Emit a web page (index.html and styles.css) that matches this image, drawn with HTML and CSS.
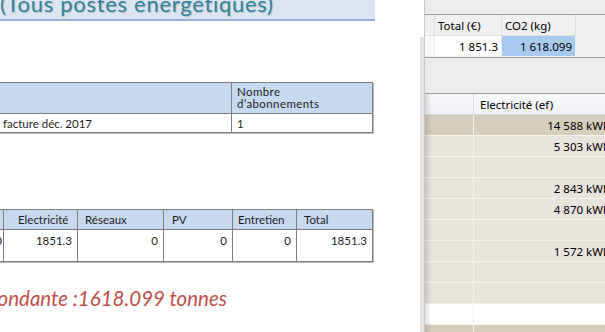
FILE: index.html
```html
<!DOCTYPE html>
<html lang="fr">
<head>
<meta charset="utf-8">
<title>Bilan</title>
<link rel="stylesheet" href="styles.css">
</head>
<body>
<div class="screen">
  <div class="doc">
    <div class="doc-head"><span class="title">(Tous postes énergétiques)</span></div>

    <div class="tbl t1">
      <div class="cell h"></div>
      <div class="cell h">Nombre<br>d’abonnements</div>
      <div class="cell d">facture déc. 2017</div>
      <div class="cell d">1</div>
    </div>

    <div class="tbl t2">
      <div class="cell h"></div>
      <div class="cell h c1">Electricité</div>
      <div class="cell h c2">Réseaux</div>
      <div class="cell h c3">PV</div>
      <div class="cell h c4">Entretien</div>
      <div class="cell h c5">Total</div>
      <div class="cell d n c0">0</div>
      <div class="cell d n">1851.3</div>
      <div class="cell d n">0</div>
      <div class="cell d n">0</div>
      <div class="cell d n">0</div>
      <div class="cell d n">1851.3</div>
    </div>

    <div class="co2"><span>Emission de CO2 correspondante :1618.099 tonnes</span></div>
  </div>

  <div class="gutter"></div>

  <div class="app">
    <div class="app-top"></div>
    <div class="g1">
      <div class="gh"></div>
      <div class="gh">Total (€)</div>
      <div class="gh">CO2 (kg)</div>
      <div class="gh last"></div>
      <div class="gd first"></div>
      <div class="gd num">1 851.3</div>
      <div class="gd num sel">1 618.099</div>
      <div class="gd last"></div>
    </div>
    <div class="mid"></div>
    <div class="g2">
      <div class="hh"></div>
      <div class="hh">Electricité (ef)</div>

      <div class="r tan"></div><div class="r tan v">14 588 kWh</div>
      <div class="r"></div><div class="r v">5 303 kWh</div>
      <div class="r"></div><div class="r v"></div>
      <div class="r"></div><div class="r v">2 843 kWh</div>
      <div class="r"></div><div class="r v">4 870 kWh</div>
      <div class="r"></div><div class="r v"></div>
      <div class="r"></div><div class="r v">1 572 kWh</div>
      <div class="r"></div><div class="r v"></div>
      <div class="r"></div><div class="r v"></div>
      <div class="r white"></div><div class="r white v"></div>
      <div class="r tan"></div><div class="r tan v"></div>
    </div>
  </div>
</div>
</body>
</html>
```

FILE: styles.css
```css
* { box-sizing: border-box; }
html, body { margin: 0; padding: 0; }
body { width: 605px; height: 332px; overflow: hidden; background: #fff; }

.screen { display: flex; height: 332px; }

/* ---------- document (left) ---------- */
.doc {
  width: 420px;
  flex: none;
  overflow: hidden;
  font-family: Lato, "Open Sans", sans-serif;
  color: #1e1e1e;
}
.doc-head {
  width: 375px;
  height: 21px;
  background: #dbe5f1;
  border-bottom: 2px solid #95b3d7;
  overflow: hidden;
}
.title {
  display: block;
  margin-top: -9px;
  font-size: 22px;
  letter-spacing: 0.7px;
  line-height: 26px;
  color: #31849b;
  white-space: nowrap;
  text-shadow: 1px 1px 1px rgba(0, 0, 0, 0.18);
}

.tbl {
  display: grid;
  width: max-content;
  font-size: 11.5px;
  line-height: 11px;
  border-top: 1px solid #7f7f7f;
  border-left: 1px solid #7f7f7f;
  box-shadow: 1px 1px 0 #b8b8b8;
}
.cell {
  border-right: 1px solid #7f7f7f;
  border-bottom: 1px solid #7f7f7f;
  white-space: nowrap;
  overflow: hidden;
}
.cell.h { background: #c6d9f1; }

.t1 {
  margin-top: 61px;
  margin-left: -3px;
  grid-template-columns: 234px 141px;
}
.t1 .h { height: 31px; padding: 3px 5px 0; line-height: 12px; letter-spacing: 0.4px; }
.t1 .d { height: 19px; padding: 4px 5px 0; }

.t2 {
  margin-top: 76px;
  margin-left: -41px;
  grid-template-columns: 44px 74px 86px 69px 64px 76px;
}
.t2 .h { height: 20px; padding: 4px 5px 0; }
.t2 .c1 { padding-left: 14px; }
.t2 .c2 { padding-left: 7px; }
.t2 .c3 { padding-left: 8px; }
.t2 .c4 { padding-left: 5px; }
.t2 .c5 { padding-left: 7px; }
.t2 .d { height: 32px; padding: 5px 5px 0; }
.t2 .n { text-align: right; }
.t2 .c0 { padding-right: 1px; }

.co2 {
  width: 227px;
  margin-top: 24px;
  display: flex;
  justify-content: flex-end;
  white-space: nowrap;
  font-size: 20.5px;
  line-height: 24px;
  font-style: italic;
  color: #c0504d;
}

/* ---------- gutter ---------- */
.gutter {
  width: 4px;
  flex: none;
  margin-top: 37px;
  background: #e4e4e4;
}

/* ---------- application panel (right) ---------- */
.app {
  flex: 1;
  position: relative;
  overflow: hidden;
  background: #f0f0f0;
  border-left: 1px solid #c8c8c8;
  font-family: "Noto Sans", "Liberation Sans", sans-serif;
  font-size: 11.5px;
  line-height: 15px;
  color: #000;
}
.app::before {
  content: "";
  position: absolute;
  left: 0;
  top: 94px;
  bottom: 0;
  width: 7px;
  background: linear-gradient(to right, rgba(0, 0, 0, 0.13), rgba(0, 0, 0, 0));
  z-index: 2;
}
.app-top { height: 14px; background: #ececec; }

.g1 {
  display: grid;
  grid-template-columns: 10px 67px 74px 1fr;
  border-top: 1px solid #a0a0a0;
  border-bottom: 1px solid #f0f0f0;
}
.gh {
  height: 21px;
  padding: 3px 3px 0;
  background: #f0f0f0;
  border-right: 1px solid #dedede;
  border-bottom: 1px solid #dedede;
  white-space: nowrap;
}
.gh.last { border-right: 0; border-bottom: 0; }
.gd {
  height: 20px;
  padding: 3px 3px 0;
  background: #fff;
  border-right: 1px solid #f0f0f0;
  white-space: nowrap;
}
.gd.first { background: #f8f8f8; }
.gd.num { text-align: right; }
.gd.sel { background: #a6caf0; }
.gd.last { background: #f0f0f0; border-right: 0; }

.mid {
  height: 36px;
  border-top: 1px solid #a0a0a0;
  background: #ececec;
}

.g2 {
  display: grid;
  grid-template-columns: 49px 141px;
  border-top: 1px solid #a0a0a0;
}
.hh {
  height: 21px;
  padding: 3px 6px 0;
  background: linear-gradient(#f8f9fb, #f1f2f5);
  border-right: 1px solid #dcdcdc;
  border-bottom: 1px solid #dcdcdc;
  white-space: nowrap;
}
.r {
  height: 21px;
  padding: 3px 4px 0;
  background: #e8e3dc;
  border-right: 1px solid #f6f3ef;
  border-bottom: 1px solid #f6f3ef;
  white-space: nowrap;
}
.r.v { text-align: right; }
.r.tan { background: #d7cdbd; }
.r.white { background: #fff; }
```
